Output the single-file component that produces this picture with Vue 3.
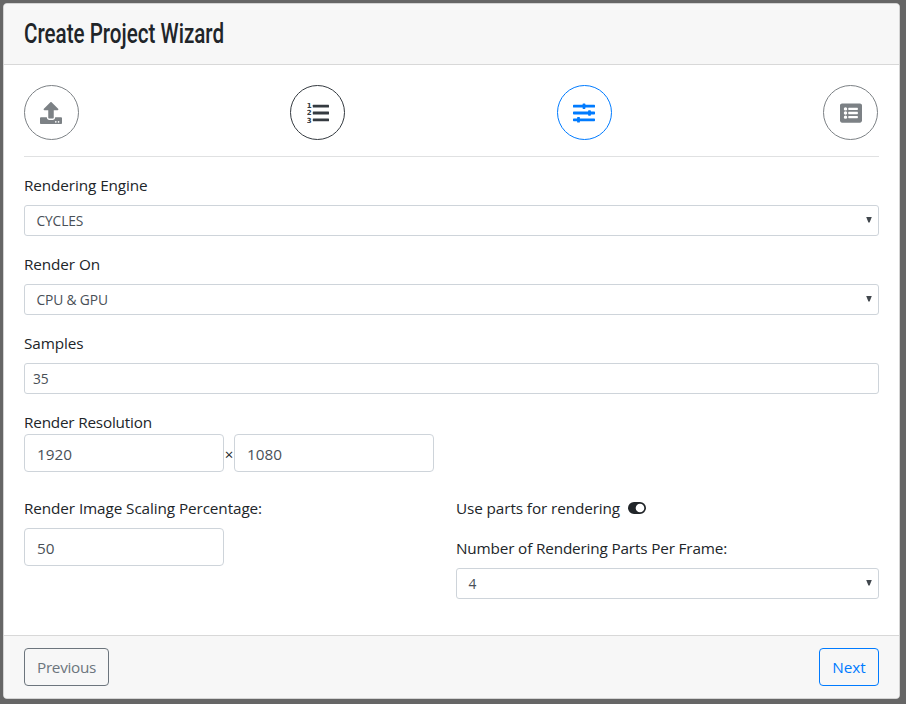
<script setup>
import { ref } from 'vue'

const engine = ref('CYCLES')
const device = ref('CPU & GPU')
const samples = ref('35')
const width = ref('1920')
const height = ref('1080')
const scaling = ref('50')
const parts = ref('4')
</script>

<template>
  <div class="backdrop">
    <section class="card">
      <header class="card-header"><h1><span>Create Project Wizard</span></h1></header>
      <main class="card-body">
        <nav class="steps">
          <div class="step muted">
            <svg class="upload" viewBox="0 0 512 512" width="22" height="22">
              <path d="M296 384h-80c-13.300 0-24-10.700-24-24V192h-87.700c-17.800 0-26.700-21.500-14.100-34.100L242.300 5.700c7.500-7.500 19.800-7.500 27.300 0l152.200 152.200c12.600 12.600 3.700 34.100-14.100 34.100H320v168c0 13.300-10.700 24-24 24zm216-8v112c0 13.300-10.700 24-24 24H24c-13.300 0-24-10.700-24-24V376c0-13.300 10.700-24 24-24h136v8c0 30.900 25.100 56 56 56h80c30.900 0 56-25.100 56-56v-8h136c13.300 0 24 10.700 24 24zm-124 88c0-11-9-20-20-20s-20 9-20 20 9 20 20 20 20-9 20-20zm64 0c0-11-9-20-20-20s-20 9-20 20 9 20 20 20 20-9 20-20z" />
            </svg>
          </div>
          <div class="step dark">
            <svg viewBox="0 0 22 22" width="22" height="22">
              <rect x="5.800" y="2.800" width="16.200" height="2.800" rx=".5" />
              <rect x="5.800" y="9.600" width="16.200" height="2.800" rx=".5" />
              <rect x="5.800" y="16.400" width="16.200" height="2.800" rx=".5" />
              <text x="-.2" y="6">1</text>
              <text x="-.2" y="13.300">2</text>
              <text x="-.2" y="20.600">3</text>
            </svg>
          </div>
          <div class="step active">
            <svg viewBox="0 0 22 22" width="22" height="22">
              <path d="M.7 2.800h20.600q.7 0 .7.700v1.400q0 .7-.7.700H.7q-.7 0-.7-.7V3.500q0-.7.7-.7zM.7 9.600h20.600q.7 0 .7.700v1.400q0 .7-.7.700H.7q-.7 0-.7-.7v-1.400q0-.7.7-.7zM.7 16.400h20.600q.7 0 .7.700v1.400q0 .7-.7.700H.7q-.7 0-.7-.7v-1.400q0-.7.7-.7z" />
              <rect x="9.600" y="1.400" width="2.800" height="5.600" rx=".7" />
              <rect x="15.100" y="8.200" width="2.800" height="5.600" rx=".7" />
              <rect x="4.100" y="15" width="2.800" height="5.600" rx=".7" />
            </svg>
          </div>
          <div class="step muted">
            <svg class="list" viewBox="0 0 512 512" width="22" height="22">
              <path fill-rule="evenodd" d="M464 480H48c-26.500 0-48-21.500-48-48V80c0-26.500 21.500-48 48-48h416c26.500 0 48 21.500 48 48v352c0 26.500-21.500 48-48 48zM128 120a40 40 0 1 0 0 80 40 40 0 0 0 0-80zm0 96a40 40 0 1 0 0 80 40 40 0 0 0 0-80zm0 96a40 40 0 1 0 0 80 40 40 0 0 0 0-80zm288-136v-32c0-6.600-5.400-12-12-12H204c-6.600 0-12 5.400-12 12v32c0 6.600 5.400 12 12 12h200c6.600 0 12-5.400 12-12zm0 96v-32c0-6.600-5.400-12-12-12H204c-6.600 0-12 5.400-12 12v32c0 6.600 5.400 12 12 12h200c6.600 0 12-5.400 12-12zm0 96v-32c0-6.600-5.400-12-12-12H204c-6.600 0-12 5.400-12 12v32c0 6.600 5.400 12 12 12h200c6.600 0 12-5.400 12-12z" />
            </svg>
          </div>
        </nav>
        <hr />
        <div class="group">
          <label>Rendering Engine</label>
          <div class="control small select">{{ engine }}<i class="caret" /></div>
        </div>
        <div class="group">
          <label>Render On</label>
          <div class="control small select">{{ device }}<i class="caret" /></div>
        </div>
        <div class="group">
          <label>Samples</label>
          <input v-model="samples" class="control small" />
        </div>
        <div class="resolution">
          <label>Render Resolution</label>
          <div class="pair">
            <input v-model="width" class="control fixed" />
            <span class="times">×</span>
            <input v-model="height" class="control fixed" />
          </div>
        </div>
        <div class="columns">
          <div class="group">
            <label>Render Image Scaling Percentage:</label>
            <input v-model="scaling" class="control fixed" />
          </div>
          <div>
            <div class="toggle-row">
              <label>Use parts for rendering</label>
              <svg class="toggle" viewBox="0 0 18 12" width="18" height="12">
                <path fill-rule="evenodd" d="M6 0h6a6 6 0 0 1 0 12H6A6 6 0 0 1 6 0zm6 1.700a4.300 4.300 0 1 0 0 8.600 4.300 4.300 0 0 0 0-8.600z" />
              </svg>
            </div>
            <div class="group parts">
              <label>Number of Rendering Parts Per Frame:</label>
              <div class="control small select">{{ parts }}<i class="caret" /></div>
            </div>
          </div>
        </div>
      </main>
      <footer class="card-footer">
        <button class="btn secondary">Previous</button>
        <button class="btn primary">Next</button>
      </footer>
    </section>
  </div>
</template>

<style>
body {
  background: #666;
  overflow: hidden;
}
</style>

<style scoped>
* {
  box-sizing: border-box;
}
.backdrop {
  height: 704px;
  padding: 3px 6px 5px 3px;
  background: #666;
  color: #212529;
  font: 370 15.3px/24px "Open Sans", "Noto Sans", sans-serif;
}
.card {
  height: 696px;
  display: flex;
  flex-direction: column;
  background: #fff;
  border: 1px solid #d4d4d4;
  border-radius: 4px;
  overflow: hidden;
}
.card-header {
  height: 61px;
  padding: 12px 20px;
  background: #f7f7f7;
  border-bottom: 1px solid #d8d8d8;
}
h1 {
  margin: 0;
  font: 500 27px/36px Roboto, sans-serif;
  white-space: nowrap;
}
h1 span {
  display: inline-block;
  transform: scaleX(0.763);
  transform-origin: left center;
}
.card-body {
  flex: 1;
  padding: 20px 20px 0;
}
.steps {
  display: flex;
  justify-content: space-between;
  padding-right: 1px;
}
.step {
  width: 55px;
  height: 55px;
  display: flex;
  align-items: center;
  justify-content: center;
  border: 1px solid currentColor;
  border-radius: 50%;
}
.step svg {
  display: block;
  fill: currentColor;
}
.step .upload {
  margin-right: 1px;
}
.step .list {
  margin-left: 1px;
}
.step text {
  font: 700 7px "DejaVu Sans", sans-serif;
}
.muted {
  color: #7c8185;
}
.dark {
  color: #343a40;
}
.active {
  color: #007bff;
}
hr {
  height: 1px;
  margin: 16px 0;
  border: 0;
  background: #e0e1e2;
}
label {
  display: block;
  white-space: nowrap;
  letter-spacing: -0.1px;
}
.group {
  margin-bottom: 16px;
}
.group label {
  margin-bottom: 8px;
}
.parts label {
  letter-spacing: -0.16px;
}
.resolution label {
  letter-spacing: -0.2px;
}
.control {
  display: block;
  width: 100%;
  height: 38px;
  padding: 4px 12px 2px;
  border: 1px solid #ced4da;
  border-radius: 4px;
  background: #fff;
  color: #495057;
  font: inherit;
  outline: none;
}
.control.small {
  height: 31px;
  padding: 0 7px 0 8px;
  border-radius: 3px;
  font-size: 13.8px;
  letter-spacing: -0.15px;
}
.control.select {
  display: flex;
  align-items: center;
  justify-content: space-between;
  padding: 0 6px 0 11.5px;
}
.control.fixed {
  width: 200px;
}
.caret {
  width: 6px;
  height: 6px;
  background: #41474d;
  clip-path: polygon(0 0, 100% 0, 60% 100%, 40% 100%);
  margin-top: -2px;
}
.resolution {
  margin-bottom: 24px;
}
.pair {
  display: flex;
  align-items: center;
}
.times {
  width: 10px;
  padding-top: 2px;
  text-align: center;
  font-size: 15px;
}
.columns {
  display: grid;
  grid-template-columns: 422px 423px;
  gap: 10px;
}
.toggle-row {
  display: flex;
  align-items: center;
  margin-bottom: 16px;
}
.toggle-row label {
  width: 172px;
}
.toggle {
  fill: #212529;
}
.card-footer {
  height: 63px;
  padding: 12px 20px;
  display: flex;
  justify-content: space-between;
  background: #f7f7f7;
  border-top: 1px solid #d8d8d8;
  flex: none;
}
.btn {
  height: 38px;
  padding: 0;
  border: 1px solid currentColor;
  border-radius: 4px;
  background: transparent;
  font: inherit;
}
.btn.secondary {
  width: 85px;
  color: #6c757d;
  letter-spacing: -0.3px;
}
.btn.primary {
  width: 60px;
  color: #007bff;
}
</style>
